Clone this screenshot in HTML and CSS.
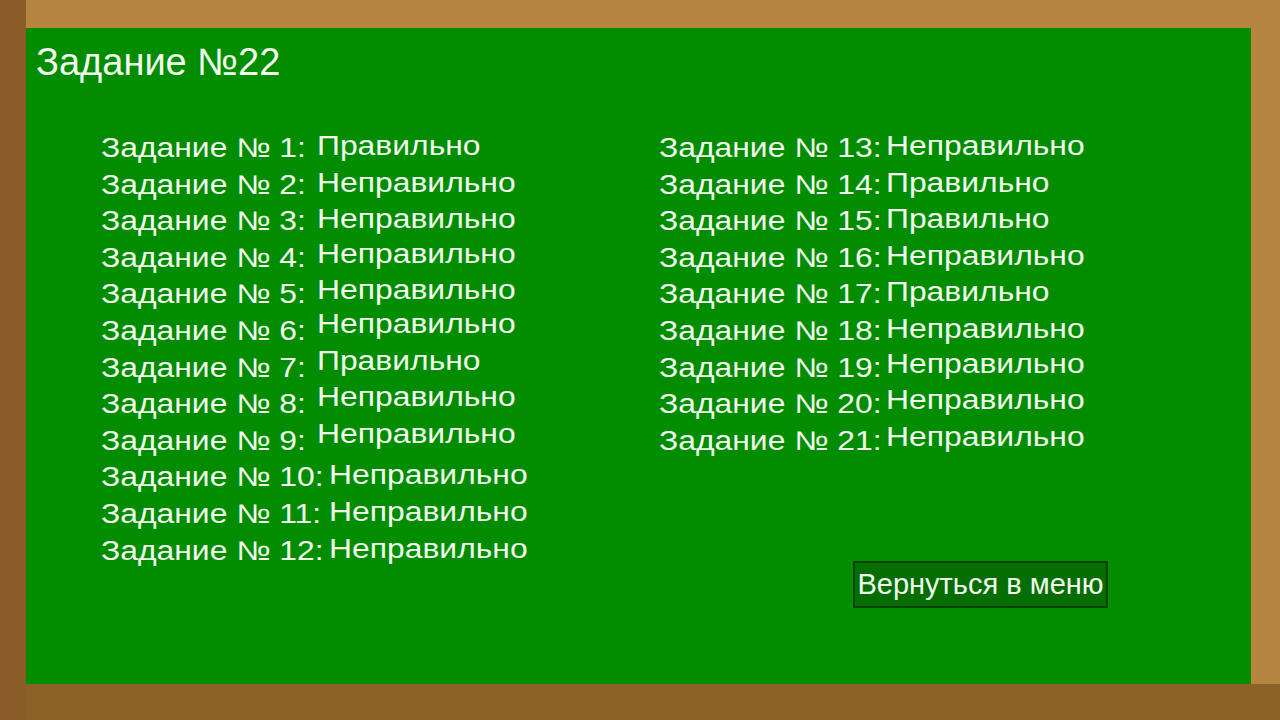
FILE: index.html
```html
<!DOCTYPE html>
<html lang="ru">
<head>
<meta charset="utf-8">
<title>Задание №22</title>
<link rel="stylesheet" href="styles.css">
</head>
<body>
<div class="frame">
  <div class="frame-left"></div>
  <main class="board">
    <h1 class="title">Задание №22</h1>
    <div class="columns">
      <div class="col col-left">
        <div class="row"><span class="label">Задание № 1:</span><span class="value">Правильно</span></div>
        <div class="row"><span class="label">Задание № 2:</span><span class="value">Неправильно</span></div>
        <div class="row"><span class="label">Задание № 3:</span><span class="value">Неправильно</span></div>
        <div class="row up"><span class="label">Задание № 4:</span><span class="value">Неправильно</span></div>
        <div class="row up"><span class="label">Задание № 5:</span><span class="value">Неправильно</span></div>
        <div class="row up2"><span class="label">Задание № 6:</span><span class="value">Неправильно</span></div>
        <div class="row up2"><span class="label">Задание № 7:</span><span class="value">Правильно</span></div>
        <div class="row up2"><span class="label">Задание № 8:</span><span class="value">Неправильно</span></div>
        <div class="row up2"><span class="label">Задание № 9:</span><span class="value">Неправильно</span></div>
        <div class="row wide"><span class="label">Задание № 10:</span><span class="value">Неправильно</span></div>
        <div class="row wide"><span class="label">Задание № 11:</span><span class="value">Неправильно</span></div>
        <div class="row wide"><span class="label">Задание № 12:</span><span class="value">Неправильно</span></div>
      </div>
      <div class="col col-right">
        <div class="list">
          <div class="row"><span class="label">Задание № 13:</span><span class="value">Неправильно</span></div>
          <div class="row"><span class="label">Задание № 14:</span><span class="value">Правильно</span></div>
          <div class="row"><span class="label">Задание № 15:</span><span class="value">Правильно</span></div>
          <div class="row"><span class="label">Задание № 16:</span><span class="value">Неправильно</span></div>
          <div class="row"><span class="label">Задание № 17:</span><span class="value">Правильно</span></div>
          <div class="row"><span class="label">Задание № 18:</span><span class="value">Неправильно</span></div>
          <div class="row up"><span class="label">Задание № 19:</span><span class="value">Неправильно</span></div>
          <div class="row up"><span class="label">Задание № 20:</span><span class="value">Неправильно</span></div>
          <div class="row up"><span class="label">Задание № 21:</span><span class="value">Неправильно</span></div>
        </div>
        <button class="menu-btn" type="button">Вернуться в меню</button>
      </div>
    </div>
  </main>
  <div class="frame-bottom"></div>
</div>
</body>
</html>
```

FILE: styles.css
```css
html, body {
  margin: 0;
  padding: 0;
}

body {
  width: 1280px;
  height: 720px;
  overflow: hidden;
  background: #b6853f;
  font-family: "Liberation Sans", Arial, sans-serif;
}

.frame {
  display: grid;
  grid-template-columns: 26px 1225px 29px;
  grid-template-rows: 28px 656px 36px;
  width: 1280px;
  height: 720px;
}

.frame-left {
  grid-column: 1;
  grid-row: 1 / 4;
  background: #8a5d28;
}

.frame-bottom {
  grid-column: 2 / 4;
  grid-row: 3;
  background: #8b6128;
}

.board {
  grid-column: 2;
  grid-row: 2;
  background: #028c00;
  color: #f1fbee;
  display: flex;
  flex-direction: column;
  padding: 14px 0 0 10px;
  box-sizing: border-box;
}

.title {
  margin: 0;
  font-weight: normal;
  font-size: 38px;
  line-height: 40px;
}

.columns {
  display: flex;
  margin-top: 48px;
  padding-left: 65px;
  height: 478px;
}

.col {
  display: flex;
  flex-direction: column;
}

.col-left {
  width: 558px;
}

.row {
  display: flex;
  font-size: 27px;
  line-height: 36.6px;
  white-space: nowrap;
}

.label,
.value {
  display: inline-block;
  transform-origin: 0 50%;
}

.label {
  width: 216px;
  flex: none;
  transform: scaleX(1.18);
}

.row.wide .label {
  width: 228px;
}

.col-right .label {
  width: 227px;
}

.value {
  transform: translateY(-2px) scaleX(1.18);
}

.row.up .value {
  transform: translateY(-4px) scaleX(1.18);
}

.row.up2 .value {
  transform: translateY(-7px) scaleX(1.18);
}

.menu-btn {
  margin-top: auto;
  margin-left: 194px;
  align-self: flex-start;
  width: 255px;
  height: 47px;
  padding: 0;
  background: #056d02;
  border: 2px solid #004300;
  color: #f1fbee;
  font-family: "Liberation Sans", Arial, sans-serif;
  font-size: 29px;
  line-height: 43px;
  text-align: center;
}
```
